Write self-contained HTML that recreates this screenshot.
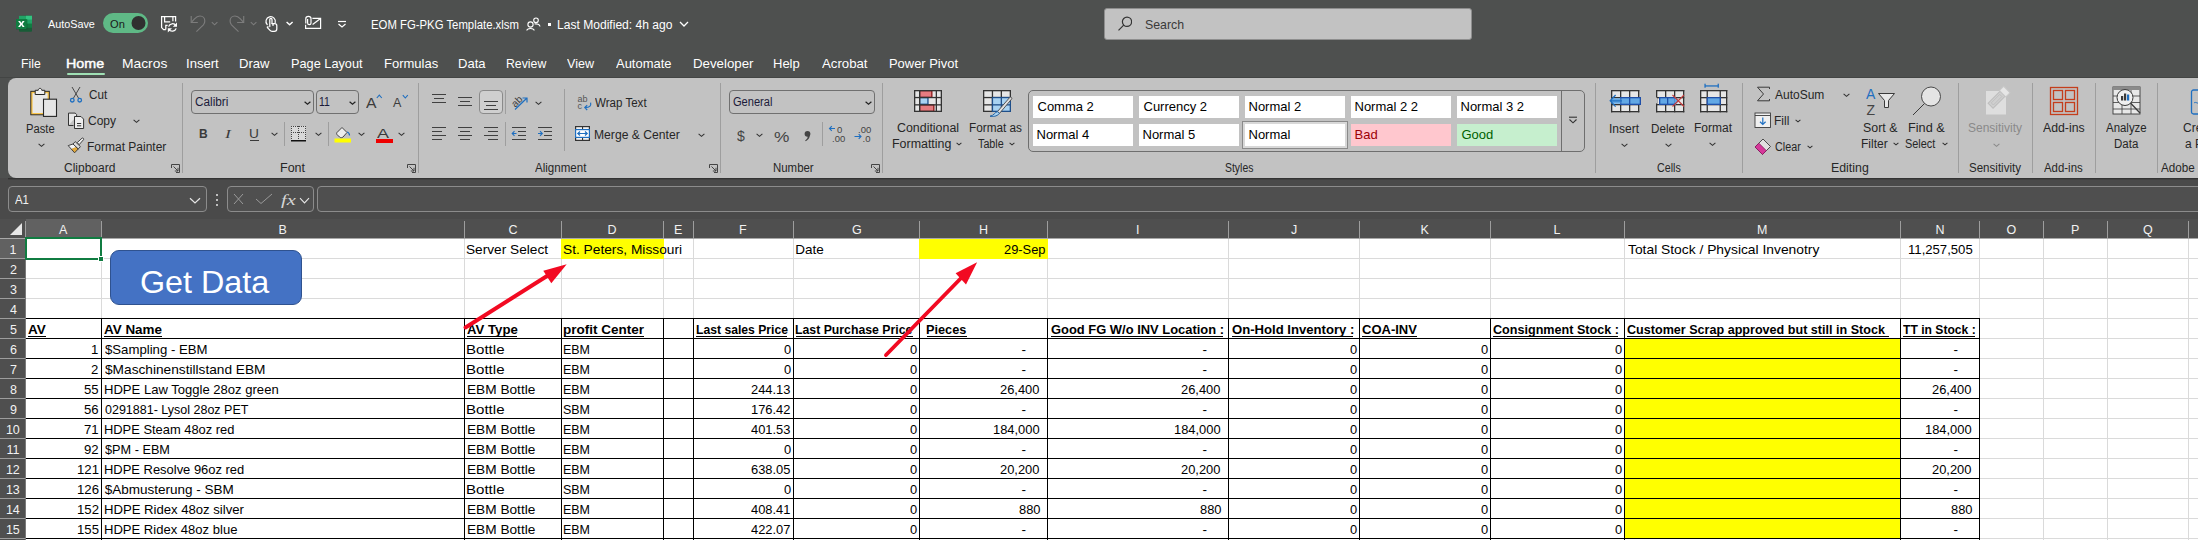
<!DOCTYPE html>
<html><head><meta charset="utf-8"><title>EOM FG-PKG Template.xlsm - Excel</title>
<style>
html,body{margin:0;padding:0;width:2198px;height:540px;overflow:hidden;background:#4e504f;font-family:"Liberation Sans",sans-serif}
body>div,body>svg{position:absolute;box-sizing:border-box}
.t{position:absolute;line-height:0;white-space:pre;transform-origin:0 0}
</style></head><body>
<div style="left:0px;top:0px;width:2198px;height:78px;background:#4e504f;"></div>
<div style="left:8px;top:78px;width:2300px;height:100px;background:#c2c2c2;border-radius:8px 0 0 8px;"></div>
<div style="left:0px;top:178px;width:2198px;height:41px;background:#4a4a4a;"></div>
<div style="left:25px;top:238px;width:2173px;height:302px;background:#ffffff;"></div>
<div style="left:0px;top:219px;width:2198px;height:19px;background:#4f4f4f;"></div>
<div style="left:26px;top:219px;width:75px;height:19px;background:#616161;"></div>
<div style="left:0px;top:238px;width:25px;height:302px;background:#4f4f4f;"></div>
<div style="left:0px;top:238px;width:25px;height:20px;background:#616161;"></div>
<div style="left:0px;top:77px;width:2198px;height:1px;background:#434544;"></div>
<div style="left:8px;top:178px;width:2198px;height:1px;background:#333333;"></div>
<div style="left:8px;top:179px;width:2198px;height:1px;background:#414141;"></div>
<div style="left:101px;top:238px;width:1px;height:302px;background:#dadada;"></div>
<div style="left:464px;top:238px;width:1px;height:302px;background:#dadada;"></div>
<div style="left:561px;top:238px;width:1px;height:302px;background:#dadada;"></div>
<div style="left:663px;top:238px;width:1px;height:302px;background:#dadada;"></div>
<div style="left:693px;top:238px;width:1px;height:302px;background:#dadada;"></div>
<div style="left:793px;top:238px;width:1px;height:302px;background:#dadada;"></div>
<div style="left:919px;top:238px;width:1px;height:302px;background:#dadada;"></div>
<div style="left:1047px;top:238px;width:1px;height:302px;background:#dadada;"></div>
<div style="left:1228px;top:238px;width:1px;height:302px;background:#dadada;"></div>
<div style="left:1359px;top:238px;width:1px;height:302px;background:#dadada;"></div>
<div style="left:1490px;top:238px;width:1px;height:302px;background:#dadada;"></div>
<div style="left:1624px;top:238px;width:1px;height:302px;background:#dadada;"></div>
<div style="left:1900px;top:238px;width:1px;height:302px;background:#dadada;"></div>
<div style="left:1979px;top:238px;width:1px;height:302px;background:#dadada;"></div>
<div style="left:2043px;top:238px;width:1px;height:302px;background:#dadada;"></div>
<div style="left:2107px;top:238px;width:1px;height:302px;background:#dadada;"></div>
<div style="left:2188px;top:238px;width:1px;height:302px;background:#dadada;"></div>
<div style="left:26px;top:258px;width:2198px;height:1px;background:#dadada;"></div>
<div style="left:26px;top:278px;width:2198px;height:1px;background:#dadada;"></div>
<div style="left:26px;top:298px;width:2198px;height:1px;background:#dadada;"></div>
<div style="left:26px;top:318px;width:2198px;height:1px;background:#dadada;"></div>
<div style="left:26px;top:338px;width:2198px;height:1px;background:#dadada;"></div>
<div style="left:26px;top:358px;width:2198px;height:1px;background:#dadada;"></div>
<div style="left:26px;top:378px;width:2198px;height:1px;background:#dadada;"></div>
<div style="left:26px;top:398px;width:2198px;height:1px;background:#dadada;"></div>
<div style="left:26px;top:418px;width:2198px;height:1px;background:#dadada;"></div>
<div style="left:26px;top:438px;width:2198px;height:1px;background:#dadada;"></div>
<div style="left:26px;top:458px;width:2198px;height:1px;background:#dadada;"></div>
<div style="left:26px;top:478px;width:2198px;height:1px;background:#dadada;"></div>
<div style="left:26px;top:498px;width:2198px;height:1px;background:#dadada;"></div>
<div style="left:26px;top:518px;width:2198px;height:1px;background:#dadada;"></div>
<div style="left:26px;top:538px;width:2198px;height:1px;background:#dadada;"></div>
<div style="left:26px;top:558px;width:2198px;height:1px;background:#dadada;"></div>
<div style="left:25px;top:221px;width:1px;height:17px;background:#9d9d9d;"></div>
<div style="left:101px;top:221px;width:1px;height:17px;background:#9d9d9d;"></div>
<div style="left:464px;top:221px;width:1px;height:17px;background:#9d9d9d;"></div>
<div style="left:561px;top:221px;width:1px;height:17px;background:#9d9d9d;"></div>
<div style="left:663px;top:221px;width:1px;height:17px;background:#9d9d9d;"></div>
<div style="left:693px;top:221px;width:1px;height:17px;background:#9d9d9d;"></div>
<div style="left:793px;top:221px;width:1px;height:17px;background:#9d9d9d;"></div>
<div style="left:919px;top:221px;width:1px;height:17px;background:#9d9d9d;"></div>
<div style="left:1047px;top:221px;width:1px;height:17px;background:#9d9d9d;"></div>
<div style="left:1228px;top:221px;width:1px;height:17px;background:#9d9d9d;"></div>
<div style="left:1359px;top:221px;width:1px;height:17px;background:#9d9d9d;"></div>
<div style="left:1490px;top:221px;width:1px;height:17px;background:#9d9d9d;"></div>
<div style="left:1624px;top:221px;width:1px;height:17px;background:#9d9d9d;"></div>
<div style="left:1900px;top:221px;width:1px;height:17px;background:#9d9d9d;"></div>
<div style="left:1979px;top:221px;width:1px;height:17px;background:#9d9d9d;"></div>
<div style="left:2043px;top:221px;width:1px;height:17px;background:#9d9d9d;"></div>
<div style="left:2107px;top:221px;width:1px;height:17px;background:#9d9d9d;"></div>
<div style="left:2188px;top:221px;width:1px;height:17px;background:#9d9d9d;"></div>
<div style="left:0px;top:258px;width:25px;height:1px;background:#9d9d9d;"></div>
<div style="left:0px;top:278px;width:25px;height:1px;background:#9d9d9d;"></div>
<div style="left:0px;top:298px;width:25px;height:1px;background:#9d9d9d;"></div>
<div style="left:0px;top:318px;width:25px;height:1px;background:#9d9d9d;"></div>
<div style="left:0px;top:338px;width:25px;height:1px;background:#9d9d9d;"></div>
<div style="left:0px;top:358px;width:25px;height:1px;background:#9d9d9d;"></div>
<div style="left:0px;top:378px;width:25px;height:1px;background:#9d9d9d;"></div>
<div style="left:0px;top:398px;width:25px;height:1px;background:#9d9d9d;"></div>
<div style="left:0px;top:418px;width:25px;height:1px;background:#9d9d9d;"></div>
<div style="left:0px;top:438px;width:25px;height:1px;background:#9d9d9d;"></div>
<div style="left:0px;top:458px;width:25px;height:1px;background:#9d9d9d;"></div>
<div style="left:0px;top:478px;width:25px;height:1px;background:#9d9d9d;"></div>
<div style="left:0px;top:498px;width:25px;height:1px;background:#9d9d9d;"></div>
<div style="left:0px;top:518px;width:25px;height:1px;background:#9d9d9d;"></div>
<div style="left:0px;top:538px;width:25px;height:1px;background:#9d9d9d;"></div>
<div style="left:0px;top:558px;width:25px;height:1px;background:#9d9d9d;"></div>
<div style="left:25px;top:238px;width:1px;height:302px;background:#7a7a7a;"></div>
<div style="left:0px;top:238px;width:2198px;height:1px;background:#a8a8a8;"></div>
<div style="left:103px;top:13px;width:45px;height:20px;background:#5fb986;border-radius:10px;"></div>
<div style="left:548px;top:23px;width:3px;height:3px;background:#ffffff;"></div>
<div style="left:1104px;top:8px;width:368px;height:32px;background:#c2c2c2;border-radius:3px;border:1px solid #8e8e8e;"></div>
<div style="left:67px;top:73px;width:38px;height:2px;background:#9fe0b4;border-radius:1px;"></div>
<div style="left:182px;top:83px;width:1px;height:90px;background:#9e9e9e;"></div>
<div style="left:418px;top:83px;width:1px;height:90px;background:#9e9e9e;"></div>
<div style="left:720px;top:83px;width:1px;height:90px;background:#9e9e9e;"></div>
<div style="left:882px;top:83px;width:1px;height:90px;background:#9e9e9e;"></div>
<div style="left:1595px;top:83px;width:1px;height:90px;background:#9e9e9e;"></div>
<div style="left:1742px;top:83px;width:1px;height:90px;background:#9e9e9e;"></div>
<div style="left:1958px;top:83px;width:1px;height:90px;background:#9e9e9e;"></div>
<div style="left:2032px;top:83px;width:1px;height:90px;background:#9e9e9e;"></div>
<div style="left:2095px;top:83px;width:1px;height:90px;background:#9e9e9e;"></div>
<div style="left:2157px;top:83px;width:1px;height:90px;background:#9e9e9e;"></div>
<div style="left:191px;top:90px;width:123px;height:24px;background:transparent;border:1px solid #707070;border-radius:4px;"></div>
<div style="left:316px;top:90px;width:43px;height:24px;background:transparent;border:1px solid #707070;border-radius:4px;"></div>
<div style="left:250px;top:140px;width:9px;height:1px;background:#3a3a3a;"></div>
<div style="left:284px;top:122px;width:1px;height:24px;background:#9e9e9e;"></div>
<div style="left:328px;top:122px;width:1px;height:24px;background:#9e9e9e;"></div>
<div style="left:376px;top:138.5px;width:17px;height:4px;background:#ee0000;"></div>
<div style="left:479px;top:90px;width:24px;height:24px;background:#cfcfcf;border:1px solid #8a8a8a;border-radius:4px;"></div>
<div style="left:505px;top:90px;width:1px;height:24px;background:#9e9e9e;"></div>
<div style="left:564px;top:89px;width:1px;height:62px;background:#9e9e9e;"></div>
<div style="left:505px;top:122px;width:1px;height:24px;background:#9e9e9e;"></div>
<div style="left:729px;top:90px;width:146px;height:24px;background:transparent;border:1px solid #707070;border-radius:4px;"></div>
<div style="left:822px;top:122px;width:1px;height:24px;background:#9e9e9e;"></div>
<div style="left:1028px;top:90px;width:557px;height:62px;background:transparent;border:1px solid #6e6e6e;border-radius:5px;"></div>
<div style="left:1561px;top:91px;width:1px;height:60px;background:#6e6e6e;"></div>
<div style="left:1033px;top:96px;width:100px;height:22px;background:#ffffff;"></div>
<div style="left:1139px;top:96px;width:100px;height:22px;background:#ffffff;"></div>
<div style="left:1245px;top:96px;width:100px;height:22px;background:#ffffff;"></div>
<div style="left:1351px;top:96px;width:100px;height:22px;background:#ffffff;"></div>
<div style="left:1457px;top:96px;width:100px;height:22px;background:#ffffff;"></div>
<div style="left:1033px;top:124px;width:100px;height:22px;background:#ffffff;"></div>
<div style="left:1139px;top:124px;width:100px;height:22px;background:#ffffff;"></div>
<div style="left:1245px;top:124px;width:100px;height:22px;background:#ffffff;"></div>
<div style="left:1351px;top:124px;width:100px;height:22px;background:#ffc7ce;"></div>
<div style="left:1457px;top:124px;width:100px;height:22px;background:#c6efce;"></div>
<div style="left:8px;top:186px;width:199px;height:26px;background:#4f4f4f;border:1px solid #8c8c8c;border-radius:4px;"></div>
<div style="left:216px;top:194px;width:2.2px;height:2.2px;background:#e6e6e6;border-radius:1px;"></div>
<div style="left:216px;top:199px;width:2.2px;height:2.2px;background:#e6e6e6;border-radius:1px;"></div>
<div style="left:216px;top:204px;width:2.2px;height:2.2px;background:#e6e6e6;border-radius:1px;"></div>
<div style="left:227px;top:186px;width:87px;height:26px;background:#4f4f4f;border:1px solid #8c8c8c;border-radius:4px;"></div>
<div style="left:317px;top:186px;width:1900px;height:26px;background:#4f4f4f;border:1px solid #8c8c8c;border-radius:4px;"></div>
<div style="left:1245px;top:124px;width:100px;height:22px;background:#ffffff;"></div>
<div style="left:1242px;top:121px;width:106px;height:28px;background:transparent;border:1px solid #8a8a8a;box-shadow:inset 0 0 0 2px #d8d8d8;"></div>
<div style="left:561px;top:239px;width:103px;height:20px;background:#ffff00;"></div>
<div style="left:919px;top:239px;width:129px;height:20px;background:#ffff00;"></div>
<div style="left:1624px;top:338px;width:276px;height:20px;background:#ffff00;"></div>
<div style="left:1624px;top:358px;width:276px;height:20px;background:#ffff00;"></div>
<div style="left:1624px;top:378px;width:276px;height:20px;background:#ffff00;"></div>
<div style="left:1624px;top:398px;width:276px;height:20px;background:#ffff00;"></div>
<div style="left:1624px;top:418px;width:276px;height:20px;background:#ffff00;"></div>
<div style="left:1624px;top:438px;width:276px;height:20px;background:#ffff00;"></div>
<div style="left:1624px;top:458px;width:276px;height:20px;background:#ffff00;"></div>
<div style="left:1624px;top:478px;width:276px;height:20px;background:#ffff00;"></div>
<div style="left:1624px;top:498px;width:276px;height:20px;background:#ffff00;"></div>
<div style="left:1624px;top:518px;width:276px;height:20px;background:#ffff00;"></div>
<div style="left:26px;top:318px;width:1954px;height:1px;background:#000000;"></div>
<div style="left:26px;top:338px;width:1954px;height:1px;background:#000000;"></div>
<div style="left:26px;top:358px;width:1954px;height:1px;background:#000000;"></div>
<div style="left:26px;top:378px;width:1954px;height:1px;background:#000000;"></div>
<div style="left:26px;top:398px;width:1954px;height:1px;background:#000000;"></div>
<div style="left:26px;top:418px;width:1954px;height:1px;background:#000000;"></div>
<div style="left:26px;top:438px;width:1954px;height:1px;background:#000000;"></div>
<div style="left:26px;top:458px;width:1954px;height:1px;background:#000000;"></div>
<div style="left:26px;top:478px;width:1954px;height:1px;background:#000000;"></div>
<div style="left:26px;top:498px;width:1954px;height:1px;background:#000000;"></div>
<div style="left:26px;top:518px;width:1954px;height:1px;background:#000000;"></div>
<div style="left:26px;top:538px;width:1954px;height:1px;background:#000000;"></div>
<div style="left:101px;top:318px;width:1px;height:240px;background:#000000;"></div>
<div style="left:464px;top:318px;width:1px;height:240px;background:#000000;"></div>
<div style="left:561px;top:318px;width:1px;height:240px;background:#000000;"></div>
<div style="left:663px;top:318px;width:1px;height:240px;background:#000000;"></div>
<div style="left:693px;top:318px;width:1px;height:240px;background:#000000;"></div>
<div style="left:793px;top:318px;width:1px;height:240px;background:#000000;"></div>
<div style="left:919px;top:318px;width:1px;height:240px;background:#000000;"></div>
<div style="left:1047px;top:318px;width:1px;height:240px;background:#000000;"></div>
<div style="left:1228px;top:318px;width:1px;height:240px;background:#000000;"></div>
<div style="left:1359px;top:318px;width:1px;height:240px;background:#000000;"></div>
<div style="left:1490px;top:318px;width:1px;height:240px;background:#000000;"></div>
<div style="left:1624px;top:318px;width:1px;height:240px;background:#000000;"></div>
<div style="left:1900px;top:318px;width:1px;height:240px;background:#000000;"></div>
<div style="left:1979px;top:318px;width:1px;height:240px;background:#000000;"></div>
<svg style="left:8px;top:221px;" width="16" height="16" viewBox="0 0 16 16"><path d="M14 2 L14 14 L2 14 Z" fill="#e6e6e6"/></svg>
<svg style="left:12px;top:12px;" width="24" height="24" viewBox="0 0 24 24">
<rect x="7" y="3.8" width="13" height="16" rx="1" fill="#185c37"/>
<rect x="7" y="3.8" width="13" height="4" fill="#21a366"/>
<rect x="14" y="3.8" width="6" height="4" fill="#33c481"/>
<rect x="7" y="7.8" width="13" height="4" fill="#21a366"/>
<rect x="7" y="11.8" width="13" height="4" fill="#107c41"/>
<rect x="4" y="7.1" width="11.4" height="10.4" rx="0.6" fill="#0b4f2a" opacity="0.5"/>
<rect x="4" y="7.1" width="10.7" height="9.8" rx="0.8" fill="#107c41"/>
<path d="M6.1 8.9 H8.1 L9.35 11 L10.6 8.9 H12.6 L10.45 12 L12.6 15.1 H10.6 L9.35 13 L8.1 15.1 H6.1 L8.25 12 Z" fill="#fff"/>
</svg>
<svg style="left:129px;top:14px;" width="18" height="18" viewBox="0 0 18 18"><circle cx="9.5" cy="9" r="7" fill="#303030"/></svg>
<svg style="left:155px;top:10px;" width="30" height="28" viewBox="0 0 30 28"><g fill="none" stroke="#fff" stroke-width="1.25" stroke-linejoin="miter">
<path d="M10.8 19.6 H8.6 L6.6 17.6 V6.6 H20.6 V11.6"/>
<path d="M9.6 6.6 V11.9 H15.2"/>
<path d="M17.9 6.6 V11.2"/>
<path d="M10.8 19.6 V15.4 H12.6"/>
<path d="M13.6 16.6 C14.6 13.2 19.2 12.8 20.8 15.6"/>
<path d="M21.2 18.4 C20.2 21.6 15.6 22.2 13.8 19.2"/>
</g>
<path d="M22 12.6 V16.8 H17.8 Z" fill="#fff"/>
<path d="M12.8 22.4 V18.2 H17 Z" fill="#fff"/></svg>
<svg style="left:185px;top:10px;" width="75" height="28" viewBox="0 0 75 28"><g fill="none" stroke="#7c7c7c" stroke-width="1.15">
<path d="M6.2 6 V12.5 H12.8"/>
<path d="M6.8 11.8 L9.5 8.8 C11.5 6.6 13.5 6 15 6 C17.8 6 19.8 8.3 19.8 11 C19.8 12.5 19.3 13.8 18.4 14.8 L11.4 21.6"/>
<path d="M26.8 12.2 L29.6 14.8 L32.4 12.2"/>
<path d="M58.7 6 V12.5 H52.1"/>
<path d="M58.1 11.8 L55.4 8.8 C53.4 6.6 51.4 6 49.9 6 C47.1 6 45.1 8.3 45.1 11 C45.1 12.5 45.6 13.8 46.5 14.8 L53.5 21.6"/>
<path d="M65.8 12.2 L68.6 14.8 L71.4 12.2"/>
</g></svg>
<svg style="left:260px;top:10px;" width="70" height="28" viewBox="0 0 70 28"><g fill="none" stroke="#fff" stroke-width="1.25" stroke-linecap="round" stroke-linejoin="round">
<path d="M7.2 14.6 A4.7 4.7 0 1 1 15.2 12.6"/>
<path d="M9.8 16.6 V9.6 Q9.8 8.4 10.9 8.4 Q12 8.4 12 9.6 V13.6 H14.6 Q16.8 13.6 16.8 15.6 V19 Q16.8 21.4 14.3 21.4 H12 Q10.8 21.4 9.8 20.2 L7.4 17.6 Q7 16.6 8.1 16.8"/>
<path d="M12 13.6 H13.8 M13 13.6 V15.4"/>
<path d="M26.6 11.9 L29.6 14.8 L32.6 11.9" stroke-width="1.4" stroke-linecap="butt"/>
</g>
<g fill="none" stroke="#fff" stroke-width="1.2">
<path d="M45.8 13.6 V8.6 C45.8 5.6 51 5.6 51 8.6 V13 C51 15.2 47.6 15.2 47.6 13 V9"/>
<path d="M45.6 14.8 V18.4 H60.6 V8.4 H52.4"/>
<path d="M52.6 14.4 L60.2 8.8"/>
</g></svg>
<svg style="left:337px;top:20px;" width="10" height="8" viewBox="0 0 10 8"><g fill="none" stroke="#fff" stroke-width="1.2"><path d="M1 1.5 H9"/><path d="M1.5 4 L5 7 L8.5 4"/></g></svg>
<svg style="left:526px;top:17px;" width="15" height="14" viewBox="0 0 15 14"><g fill="none" stroke="#fff" stroke-width="1.1"><circle cx="4.5" cy="7.5" r="2.6"/><path d="M0.8 13.5 C1 10.8 8 10.8 8.2 13.5"/><circle cx="10" cy="3.3" r="2.3"/><path d="M8.5 7 C11 6.5 13.8 7.5 14 9.5"/></g></svg>
<svg style="left:679px;top:21px;" width="10" height="7" viewBox="0 0 10 7"><path d="M1 1 L5 5 L9 1" fill="none" stroke="#fff" stroke-width="1.3"/></svg>
<svg style="left:1116px;top:16px;" width="16" height="16" viewBox="0 0 16 16"><g fill="none" stroke="#333" stroke-width="1.2"><circle cx="11" cy="5.8" r="4.6"/><path d="M7.7 9.2 L2.5 14.4"/></g></svg>
<svg style="left:171px;top:164px;" width="9" height="9" viewBox="0 0 9 9"><g fill="none" stroke="#444" stroke-width="1"><path d="M0.5 4 V0.5 H8.5 V8.5 H5"/><path d="M2.5 2.5 L7 7 M7 3.8 V7 H3.8"/></g></svg>
<svg style="left:407px;top:164px;" width="9" height="9" viewBox="0 0 9 9"><g fill="none" stroke="#444" stroke-width="1"><path d="M0.5 4 V0.5 H8.5 V8.5 H5"/><path d="M2.5 2.5 L7 7 M7 3.8 V7 H3.8"/></g></svg>
<svg style="left:709px;top:164px;" width="9" height="9" viewBox="0 0 9 9"><g fill="none" stroke="#444" stroke-width="1"><path d="M0.5 4 V0.5 H8.5 V8.5 H5"/><path d="M2.5 2.5 L7 7 M7 3.8 V7 H3.8"/></g></svg>
<svg style="left:871px;top:164px;" width="9" height="9" viewBox="0 0 9 9"><g fill="none" stroke="#444" stroke-width="1"><path d="M0.5 4 V0.5 H8.5 V8.5 H5"/><path d="M2.5 2.5 L7 7 M7 3.8 V7 H3.8"/></g></svg>
<svg style="left:29px;top:87px;" width="29" height="31" viewBox="0 0 29 31">
<rect x="1.8" y="4.3" width="18.5" height="23.5" fill="#f7c34a" stroke="#1e1e1e" stroke-width="0.9"/>
<rect x="3.6" y="6.2" width="15" height="19.8" fill="#e8e8e8"/>
<path d="M6.2 7.5 V3.3 H9.2 C9.5 0.7 12.5 0.7 12.8 3.3 H15.8 V7.5 Z" fill="#f0f0f0" stroke="#262626" stroke-width="1"/>
<rect x="14.5" y="12.2" width="13" height="17.2" fill="#e6e6e6" stroke="#262626" stroke-width="1.1"/>
</svg>
<svg style="left:37.5px;top:143px;" width="7" height="5.0" viewBox="0 0 7 5.0"><path d="M0.6 0.8 L3.5 3.3 L6.4 0.8" fill="none" stroke="#333" stroke-width="1.1"/></svg>
<svg style="left:69px;top:86px;" width="14" height="17" viewBox="0 0 14 17"><g fill="none" stroke="#3a3a3a" stroke-width="0.9"><path d="M3 1 L9.6 12.2 M11 1 L4.4 12.2"/></g>
<g fill="none" stroke="#1f6fc0" stroke-width="1.3"><circle cx="3.3" cy="14.2" r="1.8"/><circle cx="10.7" cy="14.2" r="1.8"/></g></svg>
<svg style="left:67px;top:112px;" width="18" height="18" viewBox="0 0 18 18"><path d="M1.5 13.5 V1.1 H8.2 L9.6 2.5 V4" fill="#e8e8e8" stroke="#333" stroke-width="1"/>
<path d="M1.5 13.5 H6.5" stroke="#333" stroke-width="1"/>
<path d="M7.5 4.5 H14 L16.6 7.1 V16.5 H7.5 Z" fill="#ededed" stroke="#333" stroke-width="1"/>
<path d="M10 11.5 H14.2 M10 13.8 H14.2" stroke="#333" stroke-width="1"/></svg>
<svg style="left:133px;top:118.5px;" width="7" height="5.0" viewBox="0 0 7 5.0"><path d="M0.6 0.8 L3.5 3.3 L6.4 0.8" fill="none" stroke="#333" stroke-width="1.1"/></svg>
<svg style="left:66px;top:137px;" width="19" height="18" viewBox="0 0 19 18"><path d="M11.2 5.6 L16 1.2 C16.9 0.5 18.2 1.8 17.5 2.7 L13.2 7.6 Z" fill="#f0f0f0" stroke="#333" stroke-width="0.9"/>
<path d="M9.2 4.6 L14.4 9.6 L12.2 12 L7 7 Z" fill="#dcdcdc" stroke="#333" stroke-width="0.9"/>
<path d="M2.2 8.6 L7 7 L10.2 10.1 L5.2 12 Z" fill="#f4f4f4"/>
<path d="M5.2 12 L10.2 10.1 L12.2 12 L8.6 15.8 Z" fill="#e3a93b"/>
<path d="M2.2 8.6 L7 7 L12.2 12 L8.6 15.8 Z" fill="none" stroke="#333" stroke-width="0.9" stroke-linejoin="round"/></svg>
<svg style="left:304px;top:101px;" width="7" height="5.0" viewBox="0 0 7 5.0"><path d="M0.6 0.8 L3.5 3.3 L6.4 0.8" fill="none" stroke="#222" stroke-width="1.2"/></svg>
<svg style="left:349px;top:101px;" width="7" height="5.0" viewBox="0 0 7 5.0"><path d="M0.6 0.8 L3.5 3.3 L6.4 0.8" fill="none" stroke="#222" stroke-width="1.2"/></svg>
<svg style="left:376px;top:94px;" width="7" height="5" viewBox="0 0 7 5"><path d="M0.8 4 L3.3 1.2 L5.8 4" fill="none" stroke="#1f6fc0" stroke-width="1.1"/></svg>
<svg style="left:402px;top:94px;" width="7" height="5" viewBox="0 0 7 5"><path d="M0.8 1.2 L3.3 4 L5.8 1.2" fill="none" stroke="#1f6fc0" stroke-width="1.1"/></svg>
<svg style="left:270.5px;top:132.3px;" width="7" height="5.0" viewBox="0 0 7 5.0"><path d="M0.6 0.8 L3.5 3.3 L6.4 0.8" fill="none" stroke="#333" stroke-width="1.1"/></svg>
<svg style="left:290px;top:125px;" width="17" height="17" viewBox="0 0 17 17"><rect x="1" y="1" width="15" height="14" fill="#d8d8d8"/><rect x="1" y="1" width="1" height="1" fill="#444"/><rect x="1" y="7" width="1" height="1" fill="#444"/><rect x="3" y="1" width="1" height="1" fill="#444"/><rect x="3" y="7" width="1" height="1" fill="#444"/><rect x="5" y="1" width="1" height="1" fill="#444"/><rect x="5" y="7" width="1" height="1" fill="#444"/><rect x="7" y="1" width="1" height="1" fill="#444"/><rect x="7" y="7" width="1" height="1" fill="#444"/><rect x="9" y="1" width="1" height="1" fill="#444"/><rect x="9" y="7" width="1" height="1" fill="#444"/><rect x="11" y="1" width="1" height="1" fill="#444"/><rect x="11" y="7" width="1" height="1" fill="#444"/><rect x="13" y="1" width="1" height="1" fill="#444"/><rect x="13" y="7" width="1" height="1" fill="#444"/><rect x="15" y="1" width="1" height="1" fill="#444"/><rect x="15" y="7" width="1" height="1" fill="#444"/><rect x="1" y="1" width="1" height="1" fill="#444"/><rect x="15" y="1" width="1" height="1" fill="#444"/><rect x="8" y="1" width="1" height="1" fill="#444"/><rect x="1" y="3" width="1" height="1" fill="#444"/><rect x="15" y="3" width="1" height="1" fill="#444"/><rect x="8" y="3" width="1" height="1" fill="#444"/><rect x="1" y="5" width="1" height="1" fill="#444"/><rect x="15" y="5" width="1" height="1" fill="#444"/><rect x="8" y="5" width="1" height="1" fill="#444"/><rect x="1" y="7" width="1" height="1" fill="#444"/><rect x="15" y="7" width="1" height="1" fill="#444"/><rect x="8" y="7" width="1" height="1" fill="#444"/><rect x="1" y="9" width="1" height="1" fill="#444"/><rect x="15" y="9" width="1" height="1" fill="#444"/><rect x="8" y="9" width="1" height="1" fill="#444"/><rect x="1" y="11" width="1" height="1" fill="#444"/><rect x="15" y="11" width="1" height="1" fill="#444"/><rect x="8" y="11" width="1" height="1" fill="#444"/><rect x="1" y="13" width="1" height="1" fill="#444"/><rect x="15" y="13" width="1" height="1" fill="#444"/><rect x="8" y="13" width="1" height="1" fill="#444"/><rect x="1" y="15" width="15" height="1.5" fill="#111"/></svg>
<svg style="left:314.5px;top:132.3px;" width="7" height="5.0" viewBox="0 0 7 5.0"><path d="M0.6 0.8 L3.5 3.3 L6.4 0.8" fill="none" stroke="#333" stroke-width="1.1"/></svg>
<svg style="left:334px;top:126px;" width="18" height="17" viewBox="0 0 18 17"><path d="M3 6.5 L8 1.5 L13 6.5 L9 11 C8 12 6.5 12 5.5 11 L3 8.5 C2.5 8 2.5 7 3 6.5 Z" fill="#ececec" stroke="#333" stroke-width="0.9"/>
<path d="M13 6 C15 6.5 15.5 8 15.5 9.5" fill="none" stroke="#1f6fc0" stroke-width="1.2"/>
<rect x="0.5" y="12.5" width="16.5" height="4" fill="#ffff00"/></svg>
<svg style="left:357.5px;top:132.3px;" width="7" height="5.0" viewBox="0 0 7 5.0"><path d="M0.6 0.8 L3.5 3.3 L6.4 0.8" fill="none" stroke="#333" stroke-width="1.1"/></svg>
<svg style="left:397.5px;top:132.3px;" width="7" height="5.0" viewBox="0 0 7 5.0"><path d="M0.6 0.8 L3.5 3.3 L6.4 0.8" fill="none" stroke="#333" stroke-width="1.1"/></svg>
<svg style="left:431px;top:93px;" width="16" height="16" viewBox="0 0 16 16"><rect x="1" y="1" width="14" height="1" fill="#404040"/><rect x="3" y="5" width="10" height="1" fill="#404040"/><rect x="1" y="9" width="14" height="1" fill="#404040"/></svg>
<svg style="left:457px;top:96px;" width="16" height="16" viewBox="0 0 16 16"><rect x="1" y="1" width="14" height="1" fill="#404040"/><rect x="3" y="5" width="10" height="1" fill="#404040"/><rect x="1" y="9" width="14" height="1" fill="#404040"/></svg>
<svg style="left:483px;top:101px;" width="16" height="16" viewBox="0 0 16 16"><rect x="1" y="0" width="14" height="1" fill="#404040"/><rect x="3" y="4" width="10" height="1" fill="#404040"/><rect x="1" y="8" width="14" height="1" fill="#404040"/></svg>
<svg style="left:511px;top:93px;" width="19" height="18" viewBox="0 0 19 18"><text x="0" y="11.5" font-size="10" font-family="Liberation Sans" fill="#404040" transform="rotate(-45 6 8)">ab</text>
<path d="M4 16.5 L16 5 M11.5 5 H16 V9.5" fill="none" stroke="#1f6fc0" stroke-width="1.2"/></svg>
<svg style="left:534.5px;top:101px;" width="7" height="5.0" viewBox="0 0 7 5.0"><path d="M0.6 0.8 L3.5 3.3 L6.4 0.8" fill="none" stroke="#333" stroke-width="1.1"/></svg>
<svg style="left:576px;top:94px;" width="18" height="18" viewBox="0 0 18 18"><text x="1.4" y="7.6" font-size="9" font-family="Liberation Sans" fill="#555">ab</text>
<text x="1.4" y="15" font-size="9" font-family="Liberation Sans" fill="#555">c</text>
<path d="M14.6 8.6 C15.4 12 13.6 13.6 9 13.6 M11.2 11.2 L8.8 13.6 L11.2 16" fill="none" stroke="#1f6fc0" stroke-width="1.2"/></svg>
<svg style="left:431px;top:126px;" width="16" height="16" viewBox="0 0 16 16"><rect x="1" y="1" width="14" height="1" fill="#404040"/><rect x="1" y="5" width="10" height="1" fill="#404040"/><rect x="1" y="9" width="14" height="1" fill="#404040"/><rect x="1" y="13" width="10" height="1" fill="#404040"/></svg>
<svg style="left:457px;top:126px;" width="16" height="16" viewBox="0 0 16 16"><rect x="1" y="1" width="14" height="1" fill="#404040"/><rect x="3" y="5" width="10" height="1" fill="#404040"/><rect x="1" y="9" width="14" height="1" fill="#404040"/><rect x="3" y="13" width="10" height="1" fill="#404040"/></svg>
<svg style="left:483px;top:126px;" width="16" height="16" viewBox="0 0 16 16"><rect x="1" y="1" width="14" height="1" fill="#404040"/><rect x="5" y="5" width="10" height="1" fill="#404040"/><rect x="1" y="9" width="14" height="1" fill="#404040"/><rect x="5" y="13" width="10" height="1" fill="#404040"/></svg>
<svg style="left:511px;top:126px;" width="17" height="16" viewBox="0 0 17 16"><g fill="#404040"><rect x="1" y="1" width="14" height="1"/><rect x="7" y="5" width="8" height="1"/><rect x="7" y="9" width="8" height="1"/><rect x="1" y="13" width="14" height="1"/></g>
<path d="M5.5 7.5 H1.2 M3.5 5.2 L1.2 7.5 L3.5 9.8" fill="none" stroke="#1f6fc0" stroke-width="1.1"/></svg>
<svg style="left:537px;top:126px;" width="17" height="16" viewBox="0 0 17 16"><g fill="#404040"><rect x="1" y="1" width="14" height="1"/><rect x="7" y="5" width="8" height="1"/><rect x="7" y="9" width="8" height="1"/><rect x="1" y="13" width="14" height="1"/></g>
<path d="M1 7.5 H5.3 M3 5.2 L5.3 7.5 L3 9.8" fill="none" stroke="#1f6fc0" stroke-width="1.1"/></svg>
<svg style="left:574px;top:125px;" width="18" height="17" viewBox="0 0 18 17"><rect x="1" y="1" width="15" height="15" fill="#f4f4f4"/>
<g fill="#333"><rect x="1" y="1" width="15" height="1.2"/><rect x="1" y="14.8" width="15" height="1.2"/><rect x="1" y="1" width="1.2" height="4"/><rect x="14.8" y="1" width="1.2" height="4"/><rect x="1" y="12" width="1.2" height="4"/><rect x="14.8" y="12" width="1.2" height="4"/><rect x="8" y="1" width="1.1" height="4"/><rect x="8" y="12" width="1.1" height="4"/></g>
<rect x="1.6" y="4.6" width="13.8" height="7.8" fill="#fff" stroke="#1f6fc0" stroke-width="1.2"/>
<path d="M3.8 8.5 H13.2 M6 6.5 L3.8 8.5 L6 10.5 M11 6.5 L13.2 8.5 L11 10.5" fill="none" stroke="#1f6fc0" stroke-width="1.2"/></svg>
<svg style="left:697.5px;top:133px;" width="7" height="5.0" viewBox="0 0 7 5.0"><path d="M0.6 0.8 L3.5 3.3 L6.4 0.8" fill="none" stroke="#333" stroke-width="1.1"/></svg>
<svg style="left:865px;top:101px;" width="7" height="5.0" viewBox="0 0 7 5.0"><path d="M0.6 0.8 L3.5 3.3 L6.4 0.8" fill="none" stroke="#222" stroke-width="1.2"/></svg>
<svg style="left:755.5px;top:133px;" width="7" height="5.0" viewBox="0 0 7 5.0"><path d="M0.6 0.8 L3.5 3.3 L6.4 0.8" fill="none" stroke="#333" stroke-width="1.1"/></svg>
<svg style="left:803px;top:130px;" width="9" height="12" viewBox="0 0 9 12"><circle cx="4.5" cy="3.8" r="2.9" fill="#444"/><path d="M6.6 4.5 C7.2 7.5 5.5 10 2.5 11.2 L2.2 10.4 C4.2 9.2 5 7.5 4.6 5.8 Z" fill="#444"/></svg>
<svg style="left:828px;top:124px;" width="18" height="18" viewBox="0 0 18 18"><text x="9" y="8.5" font-size="9.5" font-family="Liberation Sans" fill="#444">0</text>
<text x="4" y="17.5" font-size="9.5" font-family="Liberation Sans" fill="#444">.00</text>
<path d="M7 4.5 H1.5 M3.8 2.2 L1.5 4.5 L3.8 6.8" fill="none" stroke="#1f6fc0" stroke-width="1.1"/></svg>
<svg style="left:853px;top:124px;" width="19" height="18" viewBox="0 0 19 18"><text x="5" y="8.5" font-size="9.5" font-family="Liberation Sans" fill="#444">.00</text>
<text x="9.5" y="17.5" font-size="9.5" font-family="Liberation Sans" fill="#444">.0</text>
<path d="M1.5 12.5 H8 M5.7 10.2 L8 12.5 L5.7 14.8" fill="none" stroke="#1f6fc0" stroke-width="1.1"/></svg>
<svg style="left:913px;top:89px;" width="30" height="24" viewBox="0 0 30 24"><rect x="1" y="1" width="28" height="22" fill="#e6e6e6"/><rect x="6" y="1" width="13.5" height="7.5" fill="#8e1b1b"/><rect x="7.3" y="2.3" width="10.9" height="5.4" fill="#e67c80"/><rect x="6" y="15.2" width="15.5" height="7.8" fill="#8e1b1b"/><rect x="7.3" y="16.5" width="12.9" height="5.2" fill="#e67c80"/><rect x="6" y="7.9" width="9.6" height="8" fill="#1f4f8a"/><rect x="7.3" y="9.2" width="7" height="5.4" fill="#a9d3f2"/><rect x="1" y="1" width="1.3" height="22" fill="#333"/><rect x="22.7" y="1" width="1.3" height="22" fill="#333"/><rect x="27.7" y="1" width="1.3" height="22" fill="#333"/><rect x="1" y="1" width="28" height="1.3" fill="#333"/><rect x="1" y="7.9" width="28" height="1.3" fill="#333"/><rect x="1" y="15.2" width="28" height="1.3" fill="#333"/><rect x="1" y="21.7" width="28" height="1.3" fill="#333"/><rect x="6" y="1" width="1.3" height="22" fill="#333"/></svg>
<svg style="left:982px;top:89px;" width="32" height="30" viewBox="0 0 32 30"><rect x="1" y="1" width="28" height="22" fill="#e6e6e6"/><rect x="1" y="1" width="1.3" height="22" fill="#333"/><rect x="9.8" y="1" width="1.3" height="22" fill="#333"/><rect x="18.7" y="1" width="1.3" height="22" fill="#333"/><rect x="27.7" y="1" width="1.3" height="22" fill="#333"/><rect x="1" y="1" width="28" height="1.3" fill="#333"/><rect x="1" y="7.9" width="28" height="1.3" fill="#333"/><rect x="1" y="15.2" width="28" height="1.3" fill="#333"/><rect x="1" y="21.7" width="28" height="1.3" fill="#333"/><rect x="9.8" y="7.9" width="19.2" height="15.1" fill="#1f4f8a"/><rect x="11.1" y="9.2" width="7.6" height="6" fill="#a9d3f2"/><rect x="20" y="9.2" width="7.7" height="6" fill="#a9d3f2"/><rect x="11.1" y="16.5" width="7.6" height="5.2" fill="#a9d3f2"/><rect x="20" y="16.5" width="7.7" height="5.2" fill="#a9d3f2"/><path d="M15.5 22.5 L27.6 8.6 C28.8 7.3 30.6 8.9 29.5 10.2 L17.6 24.3 Z" fill="#e0e0e0" stroke="#444" stroke-width="0.9"/><path d="M8 27.2 C11 27.8 14.5 27.6 17.4 24.6 L15.4 22.6 C12.6 23.4 12.2 26.6 8 27.2 Z" fill="#a9d3f2" stroke="#1f5fa0" stroke-width="1"/></svg>
<svg style="left:955.5px;top:142px;" width="6" height="4.5" viewBox="0 0 6 4.5"><path d="M0.6 0.8 L3.0 2.8 L5.4 0.8" fill="none" stroke="#333" stroke-width="1.1"/></svg>
<svg style="left:1008.5px;top:142px;" width="6" height="4.5" viewBox="0 0 6 4.5"><path d="M0.6 0.8 L3.0 2.8 L5.4 0.8" fill="none" stroke="#333" stroke-width="1.1"/></svg>
<svg style="left:1568px;top:116px;" width="10" height="8" viewBox="0 0 10 8"><g fill="none" stroke="#333" stroke-width="1.1"><path d="M1 1.2 H9"/><path d="M1.5 3.5 L5 6.8 L8.5 3.5"/></g></svg>
<svg style="left:1608px;top:88px;" width="36" height="26" viewBox="0 0 36 26"><rect x="3" y="2" width="28" height="22" fill="#e6e6e6"/><rect x="3" y="2" width="1.3" height="22.3" fill="#333"/><rect x="12" y="2" width="1.3" height="22.3" fill="#333"/><rect x="21" y="2" width="1.3" height="22.3" fill="#333"/><rect x="30" y="2" width="1.3" height="22.3" fill="#333"/><rect x="3" y="2" width="28.3" height="1.3" fill="#333"/><rect x="3" y="9" width="28.3" height="1.3" fill="#333"/><rect x="3" y="16" width="28.3" height="1.3" fill="#333"/><rect x="3" y="23" width="28.3" height="1.3" fill="#333"/><rect x="12" y="9" width="21" height="8" fill="#1f4fa8"/><rect x="13.3" y="10.3" width="18.4" height="5.4" fill="#62a8e5"/><rect x="21" y="9" width="1.3" height="8" fill="#1f4fa8"/><rect x="3.5" y="10.3" width="9" height="5.4" fill="#62a8e5"/><path d="M14 12.8 H3 M7.6 7 L2.2 12.8 L7.6 18.6" fill="none" stroke="#1f6fc0" stroke-width="1.3"/></svg>
<svg style="left:1654px;top:88px;" width="33" height="26" viewBox="0 0 33 26"><rect x="2" y="2" width="28" height="22" fill="#e6e6e6"/><rect x="2" y="2" width="1.3" height="22.3" fill="#333"/><rect x="11" y="2" width="1.3" height="22.3" fill="#333"/><rect x="20" y="2" width="1.3" height="22.3" fill="#333"/><rect x="29" y="2" width="1.3" height="22.3" fill="#333"/><rect x="2" y="2" width="28.3" height="1.3" fill="#333"/><rect x="2" y="9" width="28.3" height="1.3" fill="#333"/><rect x="2" y="16" width="28.3" height="1.3" fill="#333"/><rect x="2" y="23" width="28.3" height="1.3" fill="#333"/><rect x="1" y="9.6" width="2" height="5.8" fill="#c2c2c2"/><rect x="5" y="9" width="17" height="8" fill="#1f4fa8"/><rect x="6.3" y="10.3" width="14.4" height="5.4" fill="#62a8e5"/><rect x="13" y="9" width="1.3" height="8" fill="#1f4fa8"/><path d="M21 9 L25 13 L21 17 Z" fill="#62a8e5"/><path d="M18.5 7 L30 18.5 M30 7 L18.5 18.5" stroke="#c43b3b" stroke-width="1.1"/></svg>
<svg style="left:1697px;top:88px;overflow:visible" width="33" height="26" viewBox="0 0 33 26"><g transform="translate(0,0)"><rect x="3" y="2" width="27" height="22" fill="#e6e6e6"/><rect x="3" y="2" width="1.3" height="22.3" fill="#333"/><rect x="9.6" y="2" width="1.3" height="22.3" fill="#333"/><rect x="22.6" y="2" width="1.3" height="22.3" fill="#333"/><rect x="29" y="2" width="1.3" height="22.3" fill="#333"/><rect x="3" y="2" width="27.3" height="1.3" fill="#333"/><rect x="3" y="9" width="27.3" height="1.3" fill="#333"/><rect x="3" y="16" width="27.3" height="1.3" fill="#333"/><rect x="3" y="23" width="27.3" height="1.3" fill="#333"/><rect x="9.6" y="9" width="14.3" height="8" fill="#1f4fa8"/><rect x="10.9" y="10.3" width="11.7" height="5.4" fill="#62a8e5"/><rect x="8" y="-2.7" width="13" height="1.3" fill="#1f6fc0"/><rect x="7.4" y="-4.3" width="1.3" height="4" fill="#1f6fc0"/><rect x="20.6" y="-4.3" width="1.3" height="4" fill="#1f6fc0"/></g></svg>
<svg style="left:1620.5px;top:143px;" width="7" height="5.0" viewBox="0 0 7 5.0"><path d="M0.6 0.8 L3.5 3.3 L6.4 0.8" fill="none" stroke="#333" stroke-width="1.1"/></svg>
<svg style="left:1664.5px;top:143px;" width="7" height="5.0" viewBox="0 0 7 5.0"><path d="M0.6 0.8 L3.5 3.3 L6.4 0.8" fill="none" stroke="#333" stroke-width="1.1"/></svg>
<svg style="left:1708.5px;top:142px;" width="7" height="5.0" viewBox="0 0 7 5.0"><path d="M0.6 0.8 L3.5 3.3 L6.4 0.8" fill="none" stroke="#333" stroke-width="1.1"/></svg>
<svg style="left:1756px;top:86px;" width="15" height="16" viewBox="0 0 15 16"><path d="M13.5 3 V1.2 H1.5 L7.5 8 L1.5 14.8 H13.5 V13" fill="none" stroke="#3a3a3a" stroke-width="1"/></svg>
<svg style="left:1842.5px;top:93px;" width="7" height="5.0" viewBox="0 0 7 5.0"><path d="M0.6 0.8 L3.5 3.3 L6.4 0.8" fill="none" stroke="#333" stroke-width="1.1"/></svg>
<svg style="left:1754px;top:112px;" width="18" height="17" viewBox="0 0 18 17"><rect x="1" y="1" width="15.5" height="14.5" fill="#f0f0f0" stroke="#3a3a3a" stroke-width="0.9"/><path d="M1 3.5 H16.5" stroke="#3a3a3a" stroke-width="0.9"/><path d="M8.8 5.5 V12.5 M6 9.8 L8.8 12.5 L11.6 9.8" fill="none" stroke="#1f6fc0" stroke-width="1.2"/></svg>
<svg style="left:1794.5px;top:118.5px;" width="6" height="4.5" viewBox="0 0 6 4.5"><path d="M0.6 0.8 L3.0 2.8 L5.4 0.8" fill="none" stroke="#333" stroke-width="1.1"/></svg>
<svg style="left:1754px;top:138px;" width="18" height="17" viewBox="0 0 18 17"><path d="M1 9 L9 1 L16.5 8.5 L8.5 16.5 Z" fill="#e0e0e0" stroke="#3a3a3a" stroke-width="0.9"/><path d="M1 9 L4.8 5.2 L12.3 12.7 L8.5 16.5 Z" fill="#d6389a" stroke="#8a1c60" stroke-width="0.9"/></svg>
<svg style="left:1806.5px;top:145px;" width="6" height="4.5" viewBox="0 0 6 4.5"><path d="M0.6 0.8 L3.0 2.8 L5.4 0.8" fill="none" stroke="#333" stroke-width="1.1"/></svg>
<svg style="left:1866px;top:87px;" width="30" height="29" viewBox="0 0 30 29"><text x="0" y="11.5" font-size="14" font-family="Liberation Sans" fill="#1f6fc0">A</text>
<text x="0.5" y="27.5" font-size="14" font-family="Liberation Sans" fill="#444">Z</text>
<path d="M12.5 6.5 H28.5 L22.5 13.5 V20.5 H18.5 V13.5 Z" fill="#e8e8e8" stroke="#3a3a3a" stroke-width="1"/></svg>
<svg style="left:1892.5px;top:141.5px;" width="6" height="4.5" viewBox="0 0 6 4.5"><path d="M0.6 0.8 L3.0 2.8 L5.4 0.8" fill="none" stroke="#333" stroke-width="1.1"/></svg>
<svg style="left:1911px;top:86px;" width="31" height="31" viewBox="0 0 31 31"><circle cx="20" cy="10.5" r="9.5" fill="#e4e4e4" stroke="#3a3a3a" stroke-width="0.9"/><path d="M13.5 17.5 L2 29" stroke="#3a3a3a" stroke-width="1"/></svg>
<svg style="left:1941.5px;top:141.5px;" width="6" height="4.5" viewBox="0 0 6 4.5"><path d="M0.6 0.8 L3.0 2.8 L5.4 0.8" fill="none" stroke="#333" stroke-width="1.1"/></svg>
<svg style="left:1984px;top:85px;" width="30" height="32" viewBox="0 0 30 32"><path d="M2 6 H16 L22 12 V29.5 H2 Z" fill="#dedede"/>
<g transform="rotate(-45 14 14)"><rect x="4" y="10" width="17" height="7" fill="#cfcfcf" stroke="#bdbdbd"/><rect x="21" y="9" width="6" height="9" fill="#e6e6e6" stroke="#c8c8c8"/><rect x="6.5" y="12" width="12" height="3" fill="none" stroke="#bdbdbd" stroke-width="0.8"/></g></svg>
<svg style="left:1992.5px;top:143px;" width="7" height="5.0" viewBox="0 0 7 5.0"><path d="M0.6 0.8 L3.5 3.3 L6.4 0.8" fill="none" stroke="#8a8a8a" stroke-width="1.1"/></svg>
<svg style="left:2049px;top:86px;" width="30" height="30" viewBox="0 0 30 30"><g fill="none" stroke="#c43e1c" stroke-width="1.3"><rect x="1.5" y="1.5" width="27" height="27"/><rect x="4.5" y="4.5" width="9" height="9"/><rect x="16.5" y="4.5" width="9" height="9"/><rect x="4.5" y="16.5" width="9" height="9"/><rect x="16.5" y="16.5" width="9" height="9"/></g></svg>
<svg style="left:2112px;top:86px;" width="30" height="30" viewBox="0 0 30 30"><rect x="1" y="1" width="27" height="27" fill="#e8e8e8" stroke="#3a3a3a" stroke-width="0.9"/>
<rect x="1" y="1" width="27" height="3" fill="#8a8a8a"/>
<path d="M1 10 H28 M1 16.5 H28 M1 23 H28 M10 4 V28 M19 4 V28" stroke="#3a3a3a" stroke-width="0.8"/>
<circle cx="13" cy="11.5" r="8" fill="#f0f0f0" stroke="#3a3a3a" stroke-width="1"/>
<path d="M18.5 17 L28 27" stroke="#3a3a3a" stroke-width="1.3"/>
<rect x="9" y="10" width="2.2" height="4.5" fill="#3a3a3a"/><rect x="12" y="7.5" width="2.2" height="7" fill="#3a3a3a"/><rect x="15" y="8.5" width="2.2" height="6" fill="#1f6fc0"/></svg>
<svg style="left:2190px;top:89px;" width="12" height="26" viewBox="0 0 12 26"><rect x="1.5" y="1" width="20" height="24" rx="2" fill="none" stroke="#1f6fc0" stroke-width="1.3"/><path d="M4 14 C6 12 8 16 10 13" fill="none" stroke="#1f6fc0" stroke-width="1"/></svg>
<svg style="left:189px;top:197px;" width="12" height="8" viewBox="0 0 12 8"><path d="M1 1.2 L6 6 L11 1.2" fill="none" stroke="#e6e6e6" stroke-width="1.2"/></svg>
<svg style="left:233px;top:193px;" width="11" height="12" viewBox="0 0 11 12"><path d="M1 1 L10 11 M10 1 L1 11" stroke="#9a9a9a" stroke-width="1"/></svg>
<svg style="left:255px;top:193px;" width="18" height="11" viewBox="0 0 18 11"><path d="M1 6 L6 10.5 L17 1" fill="none" stroke="#9a9a9a" stroke-width="1"/></svg>
<svg style="left:299px;top:197px;" width="11" height="8" viewBox="0 0 11 8"><path d="M1 1.2 L5.5 6 L10 1.2" fill="none" stroke="#e6e6e6" stroke-width="1.1"/></svg>
<div class="t" style="left:59.00px;top:229.62px;font-size:12.5px;color:#f2f2f2;">A</div>
<div class="t" style="left:278.50px;top:229.62px;font-size:12.5px;color:#f2f2f2;">B</div>
<div class="t" style="left:508.50px;top:229.62px;font-size:12.5px;color:#f2f2f2;">C</div>
<div class="t" style="left:607.50px;top:229.62px;font-size:12.5px;color:#f2f2f2;">D</div>
<div class="t" style="left:674.00px;top:229.62px;font-size:12.5px;color:#f2f2f2;">E</div>
<div class="t" style="left:739.00px;top:229.62px;font-size:12.5px;color:#f2f2f2;">F</div>
<div class="t" style="left:852.00px;top:229.62px;font-size:12.5px;color:#f2f2f2;">G</div>
<div class="t" style="left:979.00px;top:229.62px;font-size:12.5px;color:#f2f2f2;">H</div>
<div class="t" style="left:1136.00px;top:229.62px;font-size:12.5px;color:#f2f2f2;">I</div>
<div class="t" style="left:1291.00px;top:229.62px;font-size:12.5px;color:#f2f2f2;">J</div>
<div class="t" style="left:1420.50px;top:229.62px;font-size:12.5px;color:#f2f2f2;">K</div>
<div class="t" style="left:1553.50px;top:229.62px;font-size:12.5px;color:#f2f2f2;">L</div>
<div class="t" style="left:1757.00px;top:229.62px;font-size:12.5px;color:#f2f2f2;">M</div>
<div class="t" style="left:1935.50px;top:229.62px;font-size:12.5px;color:#f2f2f2;">N</div>
<div class="t" style="left:2006.50px;top:229.62px;font-size:12.5px;color:#f2f2f2;">O</div>
<div class="t" style="left:2071.00px;top:229.62px;font-size:12.5px;color:#f2f2f2;">P</div>
<div class="t" style="left:2143.00px;top:229.62px;font-size:12.5px;color:#f2f2f2;">Q</div>
<div class="t" style="left:2219.50px;top:229.62px;font-size:12.5px;color:#f2f2f2;">R</div>
<div class="t" style="left:9.40px;top:249.62px;font-size:12.5px;color:#f2f2f2;">1</div>
<div class="t" style="left:9.90px;top:269.62px;font-size:12.5px;color:#f2f2f2;">2</div>
<div class="t" style="left:9.90px;top:289.62px;font-size:12.5px;color:#f2f2f2;">3</div>
<div class="t" style="left:9.90px;top:309.62px;font-size:12.5px;color:#f2f2f2;">4</div>
<div class="t" style="left:9.90px;top:329.62px;font-size:12.5px;color:#f2f2f2;">5</div>
<div class="t" style="left:9.90px;top:349.62px;font-size:12.5px;color:#f2f2f2;">6</div>
<div class="t" style="left:9.90px;top:369.62px;font-size:12.5px;color:#f2f2f2;">7</div>
<div class="t" style="left:9.90px;top:389.62px;font-size:12.5px;color:#f2f2f2;">8</div>
<div class="t" style="left:9.90px;top:409.62px;font-size:12.5px;color:#f2f2f2;">9</div>
<div class="t" style="left:5.90px;top:429.62px;font-size:12.5px;color:#f2f2f2;">10</div>
<div class="t" style="left:6.40px;top:449.62px;font-size:12.5px;color:#f2f2f2;">11</div>
<div class="t" style="left:5.90px;top:469.62px;font-size:12.5px;color:#f2f2f2;">12</div>
<div class="t" style="left:5.90px;top:489.62px;font-size:12.5px;color:#f2f2f2;">13</div>
<div class="t" style="left:5.90px;top:509.62px;font-size:12.5px;color:#f2f2f2;">14</div>
<div class="t" style="left:5.90px;top:529.62px;font-size:12.5px;color:#f2f2f2;">15</div>
<div class="t" style="left:5.90px;top:549.62px;font-size:12.5px;color:#f2f2f2;">16</div>
<div class="t" style="left:465.99px;top:250.28px;font-size:13.5px;color:#000;transform:scaleX(1.0125);">Server Select</div>
<div class="t" style="left:563.28px;top:250.28px;font-size:13.5px;color:#000;transform:scaleX(1.0172);">St. Peters, Missouri</div>
<div class="t" style="left:795.30px;top:250.28px;font-size:13.5px;color:#000;">Date</div>
<div class="t" style="left:1003.60px;top:250.28px;font-size:13.5px;color:#000;transform:scaleX(0.9535);">29-Sep</div>
<div class="t" style="left:1627.50px;top:250.28px;font-size:13.5px;color:#000;transform:scaleX(1.0241);">Total Stock / Physical Invenotry</div>
<div class="t" style="left:1907.53px;top:250.28px;font-size:13.5px;color:#000;transform:scaleX(0.9723);">11,257,505</div>
<div class="t" style="left:28.00px;top:330.27px;font-size:13.5px;color:#000;font-weight:bold;">AV</div>
<div class="t" style="left:103.90px;top:330.27px;font-size:13.5px;color:#000;font-weight:bold;transform:scaleX(0.9948);">AV Name</div>
<div class="t" style="left:466.60px;top:330.27px;font-size:13.5px;color:#000;font-weight:bold;transform:scaleX(0.9769);">AV Type</div>
<div class="t" style="left:563.00px;top:330.27px;font-size:13.5px;color:#000;font-weight:bold;">profit Center</div>
<div class="t" style="left:695.50px;top:330.27px;font-size:13.5px;color:#000;font-weight:bold;transform:scaleX(0.9010);">Last sales Price</div>
<div class="t" style="left:794.99px;top:330.27px;font-size:13.5px;color:#000;font-weight:bold;transform:scaleX(0.9086);">Last Purchase Price</div>
<div class="t" style="left:926.36px;top:330.27px;font-size:13.5px;color:#000;font-weight:bold;transform:scaleX(0.9429);">Pieces</div>
<div class="t" style="left:1050.50px;top:330.27px;font-size:13.5px;color:#000;font-weight:bold;transform:scaleX(0.9572);">Good FG W/o INV Location :</div>
<div class="t" style="left:1231.60px;top:330.27px;font-size:13.5px;color:#000;font-weight:bold;transform:scaleX(0.9712);">On-Hold Inventory :</div>
<div class="t" style="left:1361.90px;top:330.27px;font-size:13.5px;color:#000;font-weight:bold;transform:scaleX(0.9632);">COA-INV</div>
<div class="t" style="left:1493.20px;top:330.27px;font-size:13.5px;color:#000;font-weight:bold;transform:scaleX(0.9328);">Consignment Stock :</div>
<div class="t" style="left:1627.40px;top:330.27px;font-size:13.5px;color:#000;font-weight:bold;transform:scaleX(0.9318);">Customer Scrap approved but still in Stock</div>
<div class="t" style="left:1903.00px;top:330.27px;font-size:13.5px;color:#000;font-weight:bold;transform:scaleX(0.8975);">TT in Stock :</div>
<div class="t" style="left:91.47px;top:350.27px;font-size:13.5px;color:#000;transform:scaleX(0.9750);">1</div>
<div class="t" style="left:104.80px;top:350.27px;font-size:13.5px;color:#000;transform:scaleX(0.9760);">$Sampling - EBM</div>
<div class="t" style="left:466.48px;top:350.27px;font-size:13.5px;color:#000;transform:scaleX(1.1152);">Bottle</div>
<div class="t" style="left:563.48px;top:350.27px;font-size:13.5px;color:#000;transform:scaleX(0.9214);">EBM</div>
<div class="t" style="left:783.52px;top:350.27px;font-size:13.5px;color:#000;transform:scaleX(0.9550);">0</div>
<div class="t" style="left:909.82px;top:350.27px;font-size:13.5px;color:#000;transform:scaleX(0.9550);">0</div>
<div class="t" style="left:1021.40px;top:350.27px;font-size:13.5px;color:#000;">-</div>
<div class="t" style="left:1202.40px;top:350.27px;font-size:13.5px;color:#000;">-</div>
<div class="t" style="left:1953.40px;top:350.27px;font-size:13.5px;color:#000;">-</div>
<div class="t" style="left:1349.82px;top:350.27px;font-size:13.5px;color:#000;transform:scaleX(0.9550);">0</div>
<div class="t" style="left:1480.91px;top:350.27px;font-size:13.5px;color:#000;transform:scaleX(0.9550);">0</div>
<div class="t" style="left:1615.32px;top:350.27px;font-size:13.5px;color:#000;transform:scaleX(0.9550);">0</div>
<div class="t" style="left:91.47px;top:370.27px;font-size:13.5px;color:#000;transform:scaleX(0.9750);">2</div>
<div class="t" style="left:104.80px;top:370.27px;font-size:13.5px;color:#000;transform:scaleX(1.0139);">$Maschinenstillstand EBM</div>
<div class="t" style="left:466.48px;top:370.27px;font-size:13.5px;color:#000;transform:scaleX(1.1152);">Bottle</div>
<div class="t" style="left:563.48px;top:370.27px;font-size:13.5px;color:#000;transform:scaleX(0.9214);">EBM</div>
<div class="t" style="left:783.52px;top:370.27px;font-size:13.5px;color:#000;transform:scaleX(0.9550);">0</div>
<div class="t" style="left:909.82px;top:370.27px;font-size:13.5px;color:#000;transform:scaleX(0.9550);">0</div>
<div class="t" style="left:1021.40px;top:370.27px;font-size:13.5px;color:#000;">-</div>
<div class="t" style="left:1202.40px;top:370.27px;font-size:13.5px;color:#000;">-</div>
<div class="t" style="left:1953.40px;top:370.27px;font-size:13.5px;color:#000;">-</div>
<div class="t" style="left:1349.82px;top:370.27px;font-size:13.5px;color:#000;transform:scaleX(0.9550);">0</div>
<div class="t" style="left:1480.91px;top:370.27px;font-size:13.5px;color:#000;transform:scaleX(0.9550);">0</div>
<div class="t" style="left:1615.32px;top:370.27px;font-size:13.5px;color:#000;transform:scaleX(0.9550);">0</div>
<div class="t" style="left:83.67px;top:390.27px;font-size:13.5px;color:#000;transform:scaleX(0.9750);">55</div>
<div class="t" style="left:103.83px;top:390.27px;font-size:13.5px;color:#000;transform:scaleX(0.9670);">HDPE Law Toggle 28oz green</div>
<div class="t" style="left:466.59px;top:390.27px;font-size:13.5px;color:#000;transform:scaleX(1.0121);">EBM Bottle</div>
<div class="t" style="left:563.48px;top:390.27px;font-size:13.5px;color:#000;transform:scaleX(0.9214);">EBM</div>
<div class="t" style="left:751.05px;top:390.27px;font-size:13.5px;color:#000;transform:scaleX(0.9550);">244.13</div>
<div class="t" style="left:909.82px;top:390.27px;font-size:13.5px;color:#000;transform:scaleX(0.9550);">0</div>
<div class="t" style="left:1000.44px;top:390.27px;font-size:13.5px;color:#000;transform:scaleX(0.9550);">26,400</div>
<div class="t" style="left:1181.44px;top:390.27px;font-size:13.5px;color:#000;transform:scaleX(0.9550);">26,400</div>
<div class="t" style="left:1932.44px;top:390.27px;font-size:13.5px;color:#000;transform:scaleX(0.9550);">26,400</div>
<div class="t" style="left:1349.82px;top:390.27px;font-size:13.5px;color:#000;transform:scaleX(0.9550);">0</div>
<div class="t" style="left:1480.91px;top:390.27px;font-size:13.5px;color:#000;transform:scaleX(0.9550);">0</div>
<div class="t" style="left:1615.32px;top:390.27px;font-size:13.5px;color:#000;transform:scaleX(0.9550);">0</div>
<div class="t" style="left:83.67px;top:410.27px;font-size:13.5px;color:#000;transform:scaleX(0.9750);">56</div>
<div class="t" style="left:104.80px;top:410.27px;font-size:13.5px;color:#000;transform:scaleX(0.9258);">0291881- Lysol 28oz PET</div>
<div class="t" style="left:466.48px;top:410.27px;font-size:13.5px;color:#000;transform:scaleX(1.1152);">Bottle</div>
<div class="t" style="left:563.48px;top:410.27px;font-size:13.5px;color:#000;transform:scaleX(0.9214);">SBM</div>
<div class="t" style="left:751.05px;top:410.27px;font-size:13.5px;color:#000;transform:scaleX(0.9550);">176.42</div>
<div class="t" style="left:909.82px;top:410.27px;font-size:13.5px;color:#000;transform:scaleX(0.9550);">0</div>
<div class="t" style="left:1021.40px;top:410.27px;font-size:13.5px;color:#000;">-</div>
<div class="t" style="left:1202.40px;top:410.27px;font-size:13.5px;color:#000;">-</div>
<div class="t" style="left:1953.40px;top:410.27px;font-size:13.5px;color:#000;">-</div>
<div class="t" style="left:1349.82px;top:410.27px;font-size:13.5px;color:#000;transform:scaleX(0.9550);">0</div>
<div class="t" style="left:1480.91px;top:410.27px;font-size:13.5px;color:#000;transform:scaleX(0.9550);">0</div>
<div class="t" style="left:1615.32px;top:410.27px;font-size:13.5px;color:#000;transform:scaleX(0.9550);">0</div>
<div class="t" style="left:83.67px;top:430.27px;font-size:13.5px;color:#000;transform:scaleX(0.9750);">71</div>
<div class="t" style="left:103.85px;top:430.27px;font-size:13.5px;color:#000;transform:scaleX(0.9548);">HDPE Steam 48oz red</div>
<div class="t" style="left:466.59px;top:430.27px;font-size:13.5px;color:#000;transform:scaleX(1.0121);">EBM Bottle</div>
<div class="t" style="left:563.48px;top:430.27px;font-size:13.5px;color:#000;transform:scaleX(0.9214);">EBM</div>
<div class="t" style="left:751.05px;top:430.27px;font-size:13.5px;color:#000;transform:scaleX(0.9550);">401.53</div>
<div class="t" style="left:909.82px;top:430.27px;font-size:13.5px;color:#000;transform:scaleX(0.9550);">0</div>
<div class="t" style="left:992.80px;top:430.27px;font-size:13.5px;color:#000;transform:scaleX(0.9550);">184,000</div>
<div class="t" style="left:1173.80px;top:430.27px;font-size:13.5px;color:#000;transform:scaleX(0.9550);">184,000</div>
<div class="t" style="left:1924.80px;top:430.27px;font-size:13.5px;color:#000;transform:scaleX(0.9550);">184,000</div>
<div class="t" style="left:1349.82px;top:430.27px;font-size:13.5px;color:#000;transform:scaleX(0.9550);">0</div>
<div class="t" style="left:1480.91px;top:430.27px;font-size:13.5px;color:#000;transform:scaleX(0.9550);">0</div>
<div class="t" style="left:1615.32px;top:430.27px;font-size:13.5px;color:#000;transform:scaleX(0.9550);">0</div>
<div class="t" style="left:83.67px;top:450.27px;font-size:13.5px;color:#000;transform:scaleX(0.9750);">92</div>
<div class="t" style="left:104.80px;top:450.27px;font-size:13.5px;color:#000;transform:scaleX(0.9412);">$PM - EBM</div>
<div class="t" style="left:466.59px;top:450.27px;font-size:13.5px;color:#000;transform:scaleX(1.0121);">EBM Bottle</div>
<div class="t" style="left:563.48px;top:450.27px;font-size:13.5px;color:#000;transform:scaleX(0.9214);">EBM</div>
<div class="t" style="left:783.52px;top:450.27px;font-size:13.5px;color:#000;transform:scaleX(0.9550);">0</div>
<div class="t" style="left:909.82px;top:450.27px;font-size:13.5px;color:#000;transform:scaleX(0.9550);">0</div>
<div class="t" style="left:1021.40px;top:450.27px;font-size:13.5px;color:#000;">-</div>
<div class="t" style="left:1202.40px;top:450.27px;font-size:13.5px;color:#000;">-</div>
<div class="t" style="left:1953.40px;top:450.27px;font-size:13.5px;color:#000;">-</div>
<div class="t" style="left:1349.82px;top:450.27px;font-size:13.5px;color:#000;transform:scaleX(0.9550);">0</div>
<div class="t" style="left:1480.91px;top:450.27px;font-size:13.5px;color:#000;transform:scaleX(0.9550);">0</div>
<div class="t" style="left:1615.32px;top:450.27px;font-size:13.5px;color:#000;transform:scaleX(0.9550);">0</div>
<div class="t" style="left:76.85px;top:470.27px;font-size:13.5px;color:#000;transform:scaleX(0.9750);">121</div>
<div class="t" style="left:103.84px;top:470.27px;font-size:13.5px;color:#000;transform:scaleX(0.9586);">HDPE Resolve 96oz red</div>
<div class="t" style="left:466.59px;top:470.27px;font-size:13.5px;color:#000;transform:scaleX(1.0121);">EBM Bottle</div>
<div class="t" style="left:563.48px;top:470.27px;font-size:13.5px;color:#000;transform:scaleX(0.9214);">EBM</div>
<div class="t" style="left:751.05px;top:470.27px;font-size:13.5px;color:#000;transform:scaleX(0.9550);">638.05</div>
<div class="t" style="left:909.82px;top:470.27px;font-size:13.5px;color:#000;transform:scaleX(0.9550);">0</div>
<div class="t" style="left:1000.44px;top:470.27px;font-size:13.5px;color:#000;transform:scaleX(0.9550);">20,200</div>
<div class="t" style="left:1181.44px;top:470.27px;font-size:13.5px;color:#000;transform:scaleX(0.9550);">20,200</div>
<div class="t" style="left:1932.44px;top:470.27px;font-size:13.5px;color:#000;transform:scaleX(0.9550);">20,200</div>
<div class="t" style="left:1349.82px;top:470.27px;font-size:13.5px;color:#000;transform:scaleX(0.9550);">0</div>
<div class="t" style="left:1480.91px;top:470.27px;font-size:13.5px;color:#000;transform:scaleX(0.9550);">0</div>
<div class="t" style="left:1615.32px;top:470.27px;font-size:13.5px;color:#000;transform:scaleX(0.9550);">0</div>
<div class="t" style="left:76.85px;top:490.27px;font-size:13.5px;color:#000;transform:scaleX(0.9750);">126</div>
<div class="t" style="left:104.80px;top:490.27px;font-size:13.5px;color:#000;">$Abmusterung - SBM</div>
<div class="t" style="left:466.48px;top:490.27px;font-size:13.5px;color:#000;transform:scaleX(1.1152);">Bottle</div>
<div class="t" style="left:563.48px;top:490.27px;font-size:13.5px;color:#000;transform:scaleX(0.9214);">SBM</div>
<div class="t" style="left:783.52px;top:490.27px;font-size:13.5px;color:#000;transform:scaleX(0.9550);">0</div>
<div class="t" style="left:909.82px;top:490.27px;font-size:13.5px;color:#000;transform:scaleX(0.9550);">0</div>
<div class="t" style="left:1021.40px;top:490.27px;font-size:13.5px;color:#000;">-</div>
<div class="t" style="left:1202.40px;top:490.27px;font-size:13.5px;color:#000;">-</div>
<div class="t" style="left:1953.40px;top:490.27px;font-size:13.5px;color:#000;">-</div>
<div class="t" style="left:1349.82px;top:490.27px;font-size:13.5px;color:#000;transform:scaleX(0.9550);">0</div>
<div class="t" style="left:1480.91px;top:490.27px;font-size:13.5px;color:#000;transform:scaleX(0.9550);">0</div>
<div class="t" style="left:1615.32px;top:490.27px;font-size:13.5px;color:#000;transform:scaleX(0.9550);">0</div>
<div class="t" style="left:76.85px;top:510.27px;font-size:13.5px;color:#000;transform:scaleX(0.9750);">152</div>
<div class="t" style="left:103.83px;top:510.27px;font-size:13.5px;color:#000;transform:scaleX(0.9713);">HDPE Ridex 48oz silver</div>
<div class="t" style="left:466.59px;top:510.27px;font-size:13.5px;color:#000;transform:scaleX(1.0121);">EBM Bottle</div>
<div class="t" style="left:563.48px;top:510.27px;font-size:13.5px;color:#000;transform:scaleX(0.9214);">EBM</div>
<div class="t" style="left:751.05px;top:510.27px;font-size:13.5px;color:#000;transform:scaleX(0.9550);">408.41</div>
<div class="t" style="left:909.82px;top:510.27px;font-size:13.5px;color:#000;transform:scaleX(0.9550);">0</div>
<div class="t" style="left:1018.59px;top:510.27px;font-size:13.5px;color:#000;transform:scaleX(0.9550);">880</div>
<div class="t" style="left:1199.59px;top:510.27px;font-size:13.5px;color:#000;transform:scaleX(0.9550);">880</div>
<div class="t" style="left:1950.59px;top:510.27px;font-size:13.5px;color:#000;transform:scaleX(0.9550);">880</div>
<div class="t" style="left:1349.82px;top:510.27px;font-size:13.5px;color:#000;transform:scaleX(0.9550);">0</div>
<div class="t" style="left:1480.91px;top:510.27px;font-size:13.5px;color:#000;transform:scaleX(0.9550);">0</div>
<div class="t" style="left:1615.32px;top:510.27px;font-size:13.5px;color:#000;transform:scaleX(0.9550);">0</div>
<div class="t" style="left:76.85px;top:530.27px;font-size:13.5px;color:#000;transform:scaleX(0.9750);">155</div>
<div class="t" style="left:103.83px;top:530.27px;font-size:13.5px;color:#000;transform:scaleX(0.9664);">HDPE Ridex 48oz blue</div>
<div class="t" style="left:466.59px;top:530.27px;font-size:13.5px;color:#000;transform:scaleX(1.0121);">EBM Bottle</div>
<div class="t" style="left:563.48px;top:530.27px;font-size:13.5px;color:#000;transform:scaleX(0.9214);">EBM</div>
<div class="t" style="left:751.05px;top:530.27px;font-size:13.5px;color:#000;transform:scaleX(0.9550);">422.07</div>
<div class="t" style="left:909.82px;top:530.27px;font-size:13.5px;color:#000;transform:scaleX(0.9550);">0</div>
<div class="t" style="left:1021.40px;top:530.27px;font-size:13.5px;color:#000;">-</div>
<div class="t" style="left:1202.40px;top:530.27px;font-size:13.5px;color:#000;">-</div>
<div class="t" style="left:1953.40px;top:530.27px;font-size:13.5px;color:#000;">-</div>
<div class="t" style="left:1349.82px;top:530.27px;font-size:13.5px;color:#000;transform:scaleX(0.9550);">0</div>
<div class="t" style="left:1480.91px;top:530.27px;font-size:13.5px;color:#000;transform:scaleX(0.9550);">0</div>
<div class="t" style="left:1615.32px;top:530.27px;font-size:13.5px;color:#000;transform:scaleX(0.9550);">0</div>
<div class="t" style="left:48.00px;top:23.98px;font-size:11.5px;color:#ffffff;transform:scaleX(0.9400);">AutoSave</div>
<div class="t" style="left:110.00px;top:23.98px;font-size:11.5px;color:#1a1a1a;transform:scaleX(0.9667);">On</div>
<div class="t" style="left:370.69px;top:24.62px;font-size:12.5px;color:#ffffff;transform:scaleX(0.9074);">EOM FG-PKG Template.xlsm</div>
<div class="t" style="left:557.03px;top:24.62px;font-size:12.5px;color:#ffffff;transform:scaleX(0.9661);">Last Modified: 4h ago</div>
<div class="t" style="left:1145.45px;top:25.45px;font-size:13px;color:#3a3a3a;transform:scaleX(0.9500);">Search</div>
<div class="t" style="left:21.10px;top:64.28px;font-size:13.5px;color:#ffffff;transform:scaleX(0.9048);">File</div>
<div class="t" style="left:65.94px;top:64.28px;font-size:13.5px;color:#ffffff;transform:scaleX(1.0571);-webkit-text-stroke:0.45px #fff;">Home</div>
<div class="t" style="left:121.98px;top:64.28px;font-size:13.5px;color:#ffffff;transform:scaleX(1.0233);">Macros</div>
<div class="t" style="left:186.03px;top:64.28px;font-size:13.5px;color:#ffffff;transform:scaleX(0.9697);">Insert</div>
<div class="t" style="left:239.03px;top:64.28px;font-size:13.5px;color:#ffffff;transform:scaleX(0.9677);">Draw</div>
<div class="t" style="left:291.46px;top:64.28px;font-size:13.5px;color:#ffffff;transform:scaleX(0.9440);">Page Layout</div>
<div class="t" style="left:384.04px;top:64.28px;font-size:13.5px;color:#ffffff;transform:scaleX(0.9636);">Formulas</div>
<div class="t" style="left:458.04px;top:64.28px;font-size:13.5px;color:#ffffff;transform:scaleX(0.9643);">Data</div>
<div class="t" style="left:506.09px;top:64.28px;font-size:13.5px;color:#ffffff;transform:scaleX(0.9091);">Review</div>
<div class="t" style="left:567.00px;top:64.28px;font-size:13.5px;color:#ffffff;transform:scaleX(0.9310);">View</div>
<div class="t" style="left:616.00px;top:64.28px;font-size:13.5px;color:#ffffff;transform:scaleX(0.9603);">Automate</div>
<div class="t" style="left:693.02px;top:64.28px;font-size:13.5px;color:#ffffff;transform:scaleX(0.9836);">Developer</div>
<div class="t" style="left:773.04px;top:64.28px;font-size:13.5px;color:#ffffff;transform:scaleX(0.9630);">Help</div>
<div class="t" style="left:822.00px;top:64.28px;font-size:13.5px;color:#ffffff;transform:scaleX(0.9787);">Acrobat</div>
<div class="t" style="left:889.04px;top:64.28px;font-size:13.5px;color:#ffffff;transform:scaleX(0.9577);">Power Pivot</div>
<div class="t" style="left:64.00px;top:167.80px;font-size:12px;color:#262626;">Clipboard</div>
<div class="t" style="left:279.96px;top:167.80px;font-size:12px;color:#262626;transform:scaleX(1.0435);">Font</div>
<div class="t" style="left:535.00px;top:167.80px;font-size:12px;color:#262626;transform:scaleX(0.9630);">Alignment</div>
<div class="t" style="left:773.05px;top:167.80px;font-size:12px;color:#262626;transform:scaleX(0.9524);">Number</div>
<div class="t" style="left:1224.73px;top:167.80px;font-size:12px;color:#262626;transform:scaleX(0.8688);">Styles</div>
<div class="t" style="left:1657.00px;top:167.80px;font-size:12px;color:#262626;transform:scaleX(0.8889);">Cells</div>
<div class="t" style="left:1830.97px;top:167.80px;font-size:12px;color:#262626;transform:scaleX(1.0286);">Editing</div>
<div class="t" style="left:1969.04px;top:167.80px;font-size:12px;color:#262626;transform:scaleX(0.9623);">Sensitivity</div>
<div class="t" style="left:2044.00px;top:167.80px;font-size:12px;color:#262626;transform:scaleX(0.9512);">Add-ins</div>
<div class="t" style="left:2161.00px;top:167.80px;font-size:12px;color:#262626;transform:scaleX(0.9714);">Adobe</div>
<div class="t" style="left:26.07px;top:128.80px;font-size:12px;color:#262626;transform:scaleX(0.9333);">Paste</div>
<div class="t" style="left:88.50px;top:94.80px;font-size:12px;color:#262626;transform:scaleX(0.9737);">Cut</div>
<div class="t" style="left:88.00px;top:120.80px;font-size:12px;color:#262626;">Copy</div>
<div class="t" style="left:87.00px;top:146.80px;font-size:12px;color:#262626;">Format Painter</div>
<div class="t" style="left:195.00px;top:101.62px;font-size:12.5px;color:#1b1b3a;transform:scaleX(0.9429);">Calibri</div>
<div class="t" style="left:319.17px;top:101.62px;font-size:12.5px;color:#1b1b3a;transform:scaleX(0.8333);">11</div>
<div class="t" style="left:366.00px;top:102.75px;font-size:15px;color:#3c3c3c;transform:scaleX(1.0500);">A</div>
<div class="t" style="left:393.00px;top:102.62px;font-size:12.5px;color:#3c3c3c;">A</div>
<div class="t" style="left:199.00px;top:134.30px;font-size:12px;color:#3a3a3a;font-weight:bold;">B</div>
<div class="t" style="left:225.00px;top:134.12px;font-size:12.5px;color:#3a3a3a;font-style:italic;font-family:'Liberation Serif';transform:scaleX(1.4000);">I</div>
<div class="t" style="left:249.36px;top:133.80px;font-size:12px;color:#3a3a3a;transform:scaleX(1.1429);">U</div>
<div class="t" style="left:377.00px;top:134.28px;font-size:13.5px;color:#3a3a3a;transform:scaleX(1.3333);">A</div>
<div class="t" style="left:595.00px;top:102.80px;font-size:12px;color:#262626;transform:scaleX(0.9630);">Wrap Text</div>
<div class="t" style="left:593.99px;top:134.80px;font-size:12px;color:#262626;transform:scaleX(1.0119);">Merge &amp; Center</div>
<div class="t" style="left:733.00px;top:101.62px;font-size:12.5px;color:#1b1b3a;transform:scaleX(0.8864);">General</div>
<div class="t" style="left:737.00px;top:135.75px;font-size:15px;color:#444;transform:scaleX(0.9375);">$</div>
<div class="t" style="left:774.00px;top:136.75px;font-size:15px;color:#444;transform:scaleX(1.1538);">%</div>
<div class="t" style="left:897.00px;top:127.80px;font-size:12px;color:#262626;transform:scaleX(1.0333);">Conditional</div>
<div class="t" style="left:891.96px;top:143.80px;font-size:12px;color:#262626;transform:scaleX(1.0357);">Formatting</div>
<div class="t" style="left:969.02px;top:127.80px;font-size:12px;color:#262626;transform:scaleX(0.9811);">Format as</div>
<div class="t" style="left:978.00px;top:143.80px;font-size:12px;color:#262626;transform:scaleX(0.8966);">Table</div>
<div class="t" style="left:1037.50px;top:107.45px;font-size:13px;color:#000000;">Comma 2</div>
<div class="t" style="left:1143.50px;top:107.45px;font-size:13px;color:#000000;">Currency 2</div>
<div class="t" style="left:1248.50px;top:107.45px;font-size:13px;color:#000000;">Normal 2</div>
<div class="t" style="left:1354.50px;top:107.45px;font-size:13px;color:#000000;">Normal 2 2</div>
<div class="t" style="left:1460.50px;top:107.45px;font-size:13px;color:#000000;">Normal 3 2</div>
<div class="t" style="left:1036.50px;top:135.45px;font-size:13px;color:#000000;">Normal 4</div>
<div class="t" style="left:1142.50px;top:135.45px;font-size:13px;color:#000000;">Normal 5</div>
<div class="t" style="left:1248.50px;top:135.45px;font-size:13px;color:#000000;">Normal</div>
<div class="t" style="left:1354.50px;top:135.45px;font-size:13px;color:#9c0006;">Bad</div>
<div class="t" style="left:1461.50px;top:135.45px;font-size:13px;color:#006100;">Good</div>
<div class="t" style="left:1609.00px;top:128.80px;font-size:12px;color:#262626;">Insert</div>
<div class="t" style="left:1651.03px;top:128.80px;font-size:12px;color:#262626;transform:scaleX(0.9706);">Delete</div>
<div class="t" style="left:1694.00px;top:127.80px;font-size:12px;color:#262626;">Format</div>
<div class="t" style="left:1775.00px;top:94.80px;font-size:12px;color:#262626;">AutoSum</div>
<div class="t" style="left:1774.00px;top:120.80px;font-size:12px;color:#262626;">Fill</div>
<div class="t" style="left:1775.00px;top:146.80px;font-size:12px;color:#262626;transform:scaleX(0.8966);">Clear</div>
<div class="t" style="left:1862.97px;top:127.80px;font-size:12px;color:#262626;transform:scaleX(1.0312);">Sort &amp;</div>
<div class="t" style="left:1861.00px;top:143.80px;font-size:12px;color:#262626;">Filter</div>
<div class="t" style="left:1907.94px;top:127.80px;font-size:12px;color:#262626;transform:scaleX(1.0588);">Find &amp;</div>
<div class="t" style="left:1905.09px;top:143.80px;font-size:12px;color:#262626;transform:scaleX(0.9091);">Select</div>
<div class="t" style="left:1968.00px;top:127.80px;font-size:12px;color:#8a8a8a;">Sensitivity</div>
<div class="t" style="left:2043.00px;top:127.80px;font-size:12px;color:#262626;transform:scaleX(1.0244);">Add-ins</div>
<div class="t" style="left:2106.00px;top:127.80px;font-size:12px;color:#262626;transform:scaleX(0.9535);">Analyze</div>
<div class="t" style="left:2114.04px;top:143.80px;font-size:12px;color:#262626;transform:scaleX(0.9600);">Data</div>
<div class="t" style="left:2183.00px;top:127.80px;font-size:12px;color:#262626;">Cre</div>
<div class="t" style="left:2185.00px;top:143.80px;font-size:12px;color:#262626;">a P</div>
<div class="t" style="left:15.00px;top:200.45px;font-size:13px;color:#f2f2f2;transform:scaleX(0.8750);">A1</div>
<div class="t" style="left:280.50px;top:199.57px;font-size:15.5px;color:#d6d6d6;font-style:italic;font-family:'Liberation Serif';transform:scaleX(1.3182);">fx</div>
<div style="left:28px;top:336px;width:18px;height:1px;background:#000;"></div>
<div style="left:103.9px;top:336px;width:57.69999999999999px;height:1px;background:#000;"></div>
<div style="left:466.6px;top:336px;width:50.799999999999955px;height:1px;background:#000;"></div>
<div style="left:564px;top:336px;width:79.70000000000005px;height:1px;background:#000;"></div>
<div style="left:696.4px;top:336px;width:91.0px;height:1px;background:#000;"></div>
<div style="left:795.9px;top:336px;width:116.89999999999998px;height:1px;background:#000;"></div>
<div style="left:927.3px;top:336px;width:39.60000000000002px;height:1px;background:#000;"></div>
<div style="left:1050.5px;top:336px;width:172.29999999999995px;height:1px;background:#000;"></div>
<div style="left:1231.6px;top:336px;width:121.40000000000009px;height:1px;background:#000;"></div>
<div style="left:1361.9px;top:336px;width:54.899999999999864px;height:1px;background:#000;"></div>
<div style="left:1493.2px;top:336px;width:125.0px;height:1px;background:#000;"></div>
<div style="left:1627.4px;top:336px;width:261.5999999999999px;height:1px;background:#000;"></div>
<div style="left:1903px;top:336px;width:71.79999999999995px;height:1px;background:#000;"></div>
<div style="left:25px;top:237px;width:77px;height:23px;background:transparent;border:2px solid #107c41;"></div>
<div style="left:98px;top:256px;width:6px;height:6px;background:#107c41;border:1px solid #fff;"></div>
<div style="left:110px;top:250px;width:192px;height:55px;background:#4472c4;border:1px solid #2f528f;border-radius:9px;"></div>
<div class="t" style="left:139.69px;top:282.40px;font-size:32px;color:#ffffff;transform:scaleX(1.0094);">Get Data</div>
<svg style="left:0;top:0" width="2198" height="540"><g fill="#f20a22"><line x1="465.5" y1="327.5" x2="555" y2="271" stroke="#f20a22" stroke-width="3.9" stroke-linecap="round"/><path d="M566.7 264.2 L543.3 270.8 L551.3 283.3 Z"/><line x1="886" y1="355" x2="968" y2="271" stroke="#f20a22" stroke-width="3.9" stroke-linecap="round"/><path d="M977.1 262.2 L955.6 273.3 L966 284.4 Z"/></g></svg>
</body></html>
